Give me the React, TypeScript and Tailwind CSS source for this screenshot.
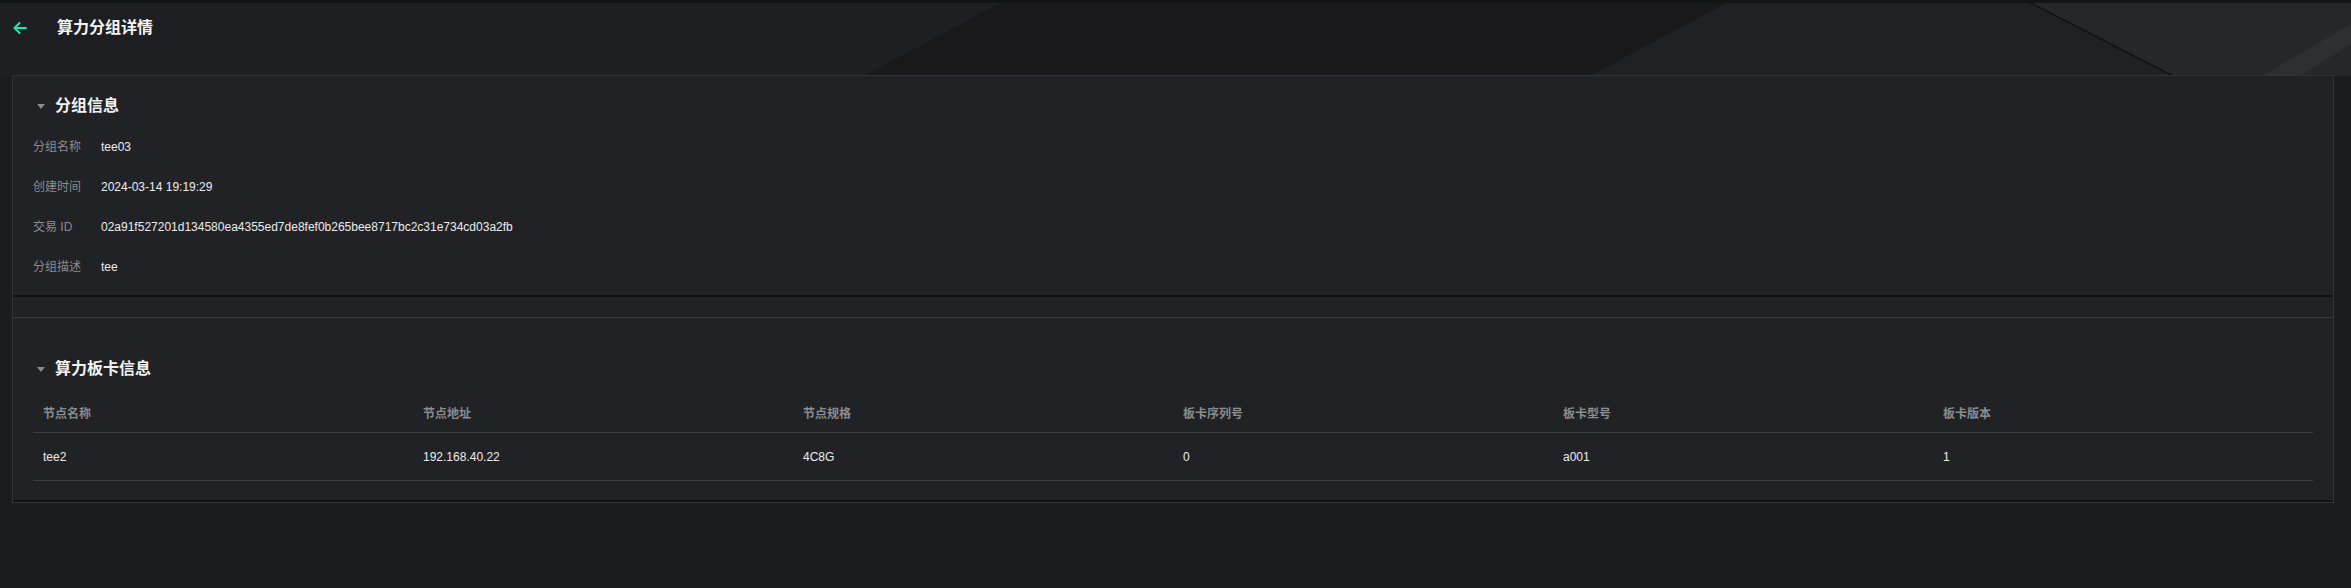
const font = "font-['Liberation_Sans','Noto_Sans_CJK_SC',sans-serif]"

const groupInfo: { label: string; value: string }[] = [
  { label: '分组名称', value: 'tee03' },
  { label: '创建时间', value: '2024-03-14 19:19:29' },
  { label: '交易 ID', value: '02a91f527201d134580ea4355ed7de8fef0b265bee8717bc2c31e734cd03a2fb' },
  { label: '分组描述', value: 'tee' },
]

const columns = ['节点名称', '节点地址', '节点规格', '板卡序列号', '板卡型号', '板卡版本']
const rows: string[][] = [['tee2', '192.168.40.22', '4C8G', '0', 'a001', '1']]

// decorative backdrop: dark slanted planes behind the page
function Backdrop() {
  return (
    <svg
      className="absolute inset-0 h-full w-full"
      viewBox="0 0 2351 588"
      preserveAspectRatio="none"
      aria-hidden="true"
    >
      <rect width="2351" height="588" fill="#1e1f22" />
      <polygon points="1006,0 1732,0 1590,76 864,76" fill="#19191c" />
      <polygon points="1732,0 2025,0 2173,76 1590,76" fill="#202124" />
      <polygon points="2025,0 2351,0 2351,76 2173,76" fill="#26272a" />
      <polygon points="2351,24 2351,44 2300,76 2262,76" fill="#2e2f33" />
      <line x1="2025" y1="0" x2="2173" y2="76" stroke="#121315" strokeWidth="1.5" />
      <rect y="76" width="2351" height="512" fill="#1c1d20" />
      <rect width="2351" height="3" fill="#131416" />
    </svg>
  )
}

function Caret() {
  return (
    <svg width="8" height="5" viewBox="0 0 8 5" className="shrink-0">
      <polygon points="0,0 8,0 4,5" fill="#8a8b8e" />
    </svg>
  )
}

function SectionTitle({ title }: { title: string }) {
  return (
    <div className="flex h-6 items-center pl-[24px]">
      <Caret />
      <span className="ml-[10px] text-[16px] font-bold leading-6 text-[#f2f2f2]">{title}</span>
    </div>
  )
}

export default function App() {
  return (
    <div className={`relative h-[588px] w-full overflow-hidden ${font}`}>
      <Backdrop />
      <div className="relative pt-[3px]">
        <div className="flex h-[50px] items-center pl-[13px]">
          <svg width="14" height="12" viewBox="0 0 14 12" fill="none" stroke="#1fe6b5" strokeWidth="2" strokeLinecap="round" strokeLinejoin="round">
            <path d="M13 6H1.5M6.5 1 1.5 6l5 5" />
          </svg>
          <span className="ml-[30px] text-[16px] font-bold text-[#f4f4f4]">算力分组详情</span>
        </div>

        <div className="ml-[12px] mr-[17px] mt-[22px] border border-[#33343a] bg-[#212226]">
          <section className="border-b-2 border-[#111214] pb-[8px] pt-[18px]">
            <SectionTitle title="分组信息" />
            <div className="mt-[9px] px-[20px]">
              {groupInfo.map((item) => (
                <div key={item.label} className="flex h-[40px] items-center text-[12px]">
                  <span className="w-[68px] shrink-0 text-[#8b8c8f]">{item.label}</span>
                  <span className="text-[#ececec]">{item.value}</span>
                </div>
              ))}
            </div>
          </section>

          <div className="h-[20px]" />

          <section className="border-t border-b-2 border-t-[#3a3b40] border-b-[#111214] pb-[19px] pt-[39px]">
            <SectionTitle title="算力板卡信息" />
            <div className="mt-[14px] px-[20px]">
              <div className="grid h-[38px] grid-cols-6 items-center border-b border-[#3c3d42] text-[12px] font-bold text-[#8b8c8f]">
                {columns.map((c) => (
                  <span key={c} className="pl-[10px]">{c}</span>
                ))}
              </div>
              {rows.map((r, i) => (
                <div key={i} className="grid h-[48px] grid-cols-6 items-center border-b border-[#3c3d42] text-[12px] text-[#ececec]">
                  {r.map((cell, j) => (
                    <span key={j} className="pl-[10px]">{cell}</span>
                  ))}
                </div>
              ))}
            </div>
          </section>
        </div>
      </div>
    </div>
  )
}
